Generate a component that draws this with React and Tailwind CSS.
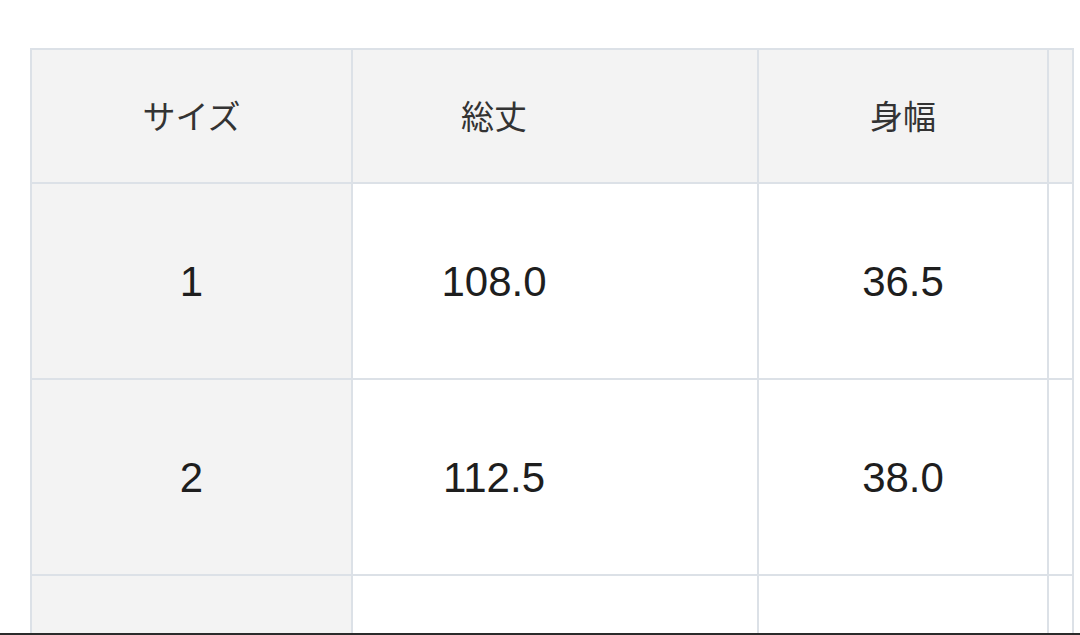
import React from "react";

const headers = ["サイズ", "総丈", "身幅", ""];

const rows = [
  ["1", "108.0", "36.5", ""],
  ["2", "112.5", "38.0", ""],
  ["", "", "", ""],
];

const cellBorder = "border-2 border-[#dce1e7]";

const SizeTable = () => (
  <table className="table-fixed border-collapse w-[1042px]">
    <colgroup>
      <col className="w-[321px]" />
      <col className="w-[406px]" />
      <col className="w-[290px]" />
      <col className="w-[25px]" />
    </colgroup>
    <thead>
      <tr className="h-[134px] bg-[#f3f3f3]">
        {headers.map((h, i) => (
          <th
            key={i}
            className={`${cellBorder} font-normal text-[33px] text-[#333] ${
              i === 1 ? "pr-[122px]" : ""
            }`}
            style={{ fontFamily: '"Noto Sans CJK JP", "Noto Sans", sans-serif' }}
          >
            {h}
          </th>
        ))}
      </tr>
    </thead>
    <tbody>
      {rows.map((row, r) => (
        <tr key={r} className="h-[196px]">
          {row.map((v, i) => (
            <td
              key={i}
              className={`${cellBorder} text-center align-middle text-[42px] text-[#1e1e1e] font-['Liberation_Sans',Arial,sans-serif] ${
                i === 0 ? "bg-[#f3f3f3]" : "bg-white"
              } ${i === 1 ? "pr-[122px]" : ""}`}
            >
              {v}
            </td>
          ))}
        </tr>
      ))}
    </tbody>
  </table>
);

export default function App() {
  return (
    <div className="h-[635px] w-[1080px] bg-white flex flex-col overflow-hidden">
      <div className="flex-1 overflow-hidden pt-[48px] pl-[30px]">
        <SizeTable />
      </div>
      <div className="h-[2px] bg-[#2b2b2b]" />
    </div>
  );
}
